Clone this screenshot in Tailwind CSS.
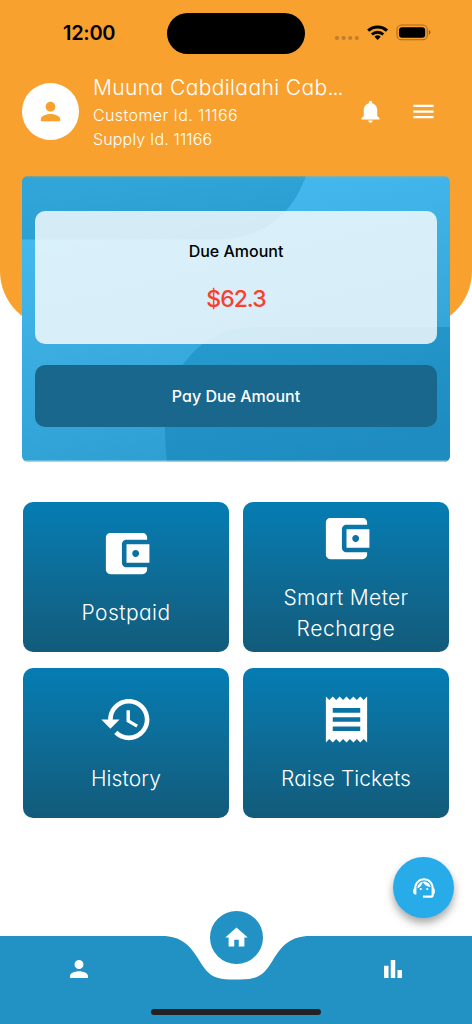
<!DOCTYPE html>
<html lang="en">
<head>
<meta charset="utf-8">
<title>Customer Home</title>
<script src="https://cdn.jsdelivr.net/npm/@tailwindcss/browser@4"></script>
</head>
<body class="bg-white font-['Inter','Open_Sans',sans-serif] [font-feature-settings:'cv11']">
<div class="relative w-[472px] h-[1024px] overflow-hidden bg-white flex flex-col">
  <div class="absolute inset-x-0 top-0 h-[328px] bg-[#f8a12f] rounded-b-[57px]"></div>

  <!-- status bar -->
  <div class="relative h-[66px] shrink-0 flex items-center pl-[63px] pr-[41px]">
    <div class="w-[104px] text-[20px] leading-none font-semibold text-black tracking-[-0.3px]">12:00</div>
    <div class="w-[138px] h-[41px] rounded-full bg-black"></div>
    <svg class="ml-[30px]" width="96" height="20" viewBox="335 22.5 96 20">
      <g fill="#c17f2c"><circle cx="337" cy="37.5" r="2.1"/><circle cx="343.6" cy="37.5" r="2.1"/><circle cx="350.2" cy="37.5" r="2.1"/><circle cx="356.8" cy="37.5" r="2.1"/></g>
      <g fill="none" stroke="#000" stroke-width="3"><path d="M368.2 30.2a13.6 13.6 0 0 1 18.8 0"/><path d="M371.9 34a8.2 8.2 0 0 1 11.4 0"/></g>
      <path d="M377.6 39.4l-3.1-3.2a4.6 4.6 0 0 1 6.2 0z"/>
      <rect x="397" y="24.5" width="30.3" height="14.8" rx="4.6" fill="none" stroke="#a56c24" stroke-width="1.1"/>
      <rect x="399" y="26.7" width="26.2" height="10.5" rx="3" />
      <path d="M428.8 29.6c2.2.6 2.2 4.1 0 4.700z" fill="#8d5d20"/>
    </svg>
  </div>

  <!-- header -->
  <div class="relative h-[110px] shrink-0 flex items-start pl-[22px] text-white">
    <div class="mt-[17px] size-[57px] rounded-full bg-white flex items-center justify-center">
      <svg width="29" height="29" viewBox="0 0 24 24" fill="#f8a12f"><path d="M12 12c2.210 0 4-1.790 4-4s-1.790-4-4-4-4 1.790-4 4 1.790 4 4 4zm0 2c-2.670 0-8 1.340-8 4v2h16v-2c0-2.660-5.330-4-8-4z"/></svg>
    </div>
    <div class="ml-[14px] mt-[7px] w-[264.300px] whitespace-nowrap font-[350]">
      <div class="text-[21px] leading-[30px] tracking-[0.4px]">Muuna Cabdilaahi Cab<span class="tracking-[-1px]">...</span></div>
      <div class="text-[16px] leading-[24px] tracking-[0.4px]">Customer Id. 11166</div>
      <div class="text-[16px] leading-[24px] tracking-[0.15px]">Supply Id. 11166</div>
    </div>
    <svg class="mt-[32px]" width="27" height="27" viewBox="0 0 24 24" fill="#fff"><path d="M12 22c1.100 0 2-.9 2-2h-4c0 1.100.89 2 2 2zm6-6v-5c0-3.070-1.640-5.640-4.500-6.320V4c0-.83-.67-1.500-1.500-1.500s-1.500.67-1.500 1.500v.68C7.630 5.360 6 7.920 6 11v5l-2 2v1h16v-1l-2-2z"/></svg>
    <svg class="mt-[32px] ml-[25.400px]" width="27" height="27" viewBox="0 0 24 24" fill="#fff"><path d="M3 18h18v-2H3v2zm0-5h18v-2H3v2zm0-7v2h18V6H3z"/></svg>
  </div>

  <!-- due amount card -->
  <div class="relative ml-[22px] w-[428px] h-[286px] shrink-0 rounded-[6px] overflow-hidden">
    <svg class="absolute inset-0" width="428" height="286" viewBox="22 176 428 286">
      <defs>
        <linearGradient id="base" gradientUnits="userSpaceOnUse" x1="200" y1="190" x2="260" y2="440"><stop offset="0" stop-color="#45b9ee"/><stop offset="1" stop-color="#2f9fd2"/></linearGradient>
        <linearGradient id="low" gradientUnits="userSpaceOnUse" x1="280" y1="327" x2="310" y2="462"><stop offset="0" stop-color="#2599cd"/><stop offset="1" stop-color="#1e8cc0"/></linearGradient>
        <linearGradient id="top" gradientUnits="userSpaceOnUse" x1="150" y1="176" x2="160" y2="240"><stop offset="0" stop-color="#31a4d8"/><stop offset="1" stop-color="#2a9dd1"/></linearGradient>
      </defs>
      <path fill="url(#base)" d="M22 176h428v286H22z"/>
      <path fill="url(#top)" d="M22 176H306C292 214 264 239.500 215 239.500H22z"/>
      <path fill="url(#low)" d="M167 462C162 414 166 383 184 363C202 340 222 327 262 327H450V462z"/>
      <path fill="#fff" fill-opacity=".55" d="M22 460.500h428v1.500H22z"/>
      <path fill="#f8a12f" fill-opacity=".4" d="M22 176h428v1.200H22z"/>
    </svg>
    <div class="relative px-[13px] pt-[35px] flex flex-col gap-[20.500px] text-center">
      <div class="h-[133px] rounded-[10px] bg-white/80 pt-[28px]">
        <div class="text-[16px] leading-[24px] font-medium text-black tracking-[0px]">Due Amount</div>
        <div class="mt-[19px] text-[23px] leading-[34px] font-medium text-[#f9402f] tracking-[-1px]">$62.3</div>
      </div>
      <div class="h-[62.400px] rounded-[10px] bg-[#19678d] flex items-center justify-center text-[16px] font-medium text-white tracking-[0px]">Pay Due Amount</div>
    </div>
  </div>

  <!-- services -->
  <div class="mt-[40px] ml-[23px] grid grid-cols-[206px_206px] grid-rows-[150px_150px] gap-x-[14px] gap-y-[16px] text-[21px] leading-[31px] font-[350] text-white text-center">
    <div class="rounded-[10px] bg-linear-to-b from-[#047db3] to-[#125b7a] flex flex-col items-center justify-center gap-[16px]">
      <svg width="55" height="55" viewBox="0 0 24 24" fill="#fff"><path d="M21 18v1c0 1.100-.9 2-2 2H5c-1.110 0-2-.9-2-2V5c0-1.100.89-2 2-2h14c1.100 0 2 .9 2 2v1h-9c-1.110 0-2 .9-2 2v8c0 1.100.89 2 2 2h9zm-9-2h10V8H12v8zm4-2.500c-.83 0-1.500-.67-1.500-1.500s.67-1.500 1.500-1.500 1.500.67 1.500 1.500-.67 1.500-1.500 1.500z"/></svg>
      <div class="tracking-[0.45px]">Postpaid</div>
    </div>
    <div class="rounded-[10px] bg-linear-to-b from-[#047db3] to-[#125b7a] flex flex-col items-center justify-center gap-[16px]">
      <svg class="shrink-0" width="55" height="55" viewBox="0 0 24 24" fill="#fff"><path d="M21 18v1c0 1.100-.9 2-2 2H5c-1.110 0-2-.9-2-2V5c0-1.100.89-2 2-2h14c1.100 0 2 .9 2 2v1h-9c-1.110 0-2 .9-2 2v8c0 1.100.89 2 2 2h9zm-9-2h10V8H12v8zm4-2.500c-.83 0-1.500-.67-1.500-1.500s.67-1.500 1.500-1.500 1.500.67 1.500 1.500-.67 1.500-1.500 1.500z"/></svg>
      <div class="tracking-[0.35px]">Smart Meter<br><span class="tracking-[0.6px]">Recharge</span></div>
    </div>
    <div class="rounded-[10px] bg-linear-to-b from-[#047db3] to-[#125b7a] flex flex-col items-center justify-center gap-[16px]">
      <svg width="55" height="55" viewBox="0 0 24 24" fill="#fff"><path d="M13 3c-4.970 0-9 4.030-9 9H1l3.890 3.890.07.14L9 12H6c0-3.870 3.130-7 7-7s7 3.130 7 7-3.130 7-7 7c-1.930 0-3.680-.79-4.940-2.060l-1.420 1.420C8.270 19.990 10.510 21 13 21c4.970 0 9-4.030 9-9s-4.030-9-9-9zm-1 5v5l4.280 2.540.72-1.210-3.500-2.080V8H12z"/></svg>
      <div class="tracking-[0.1px]">History</div>
    </div>
    <div class="rounded-[10px] bg-linear-to-b from-[#047db3] to-[#125b7a] flex flex-col items-center justify-center gap-[16px]">
      <svg width="55" height="55" viewBox="0 0 24 24" fill="#fff"><path d="M18 17H6v-2h12v2zm0-4H6v-2h12v2zm0-4H6V7h12v2zM3 22l1.500-1.500L6 22l1.500-1.500L9 22l1.500-1.500L12 22l1.500-1.500L15 22l1.500-1.500L18 22l1.500-1.500L21 22V2l-1.500 1.500L18 2l-1.500 1.500L15 2l-1.500 1.500L12 2l-1.500 1.500L9 2 7.500 3.500 6 2 4.500 3.500 3 2v20z"/></svg>
      <div class="tracking-[0.05px]">Raise Tickets</div>
    </div>
  </div>

  <!-- support button -->
  <div class="absolute left-[393px] top-[857px] size-[61px] rounded-full bg-[#28abe9] shadow-[0_5px_9px_rgba(0,0,0,0.35)] flex items-center justify-center">
    <svg width="26" height="26" viewBox="0 0 24 24" fill="#fff"><path d="M21 12.220C21 6.730 16.740 3 12 3c-4.690 0-9 3.650-9 9.280-.6.340-1 .98-1 1.720v2c0 1.100.9 2 2 2h1v-6.100c0-3.870 3.130-7 7-7s7 3.130 7 7V19h-8v2h8c1.100 0 2-.9 2-2v-1.220c.59-.31 1-.92 1-1.640v-2.300c0-.7-.41-1.310-1-1.620z"/><circle cx="9" cy="13" r="1"/><circle cx="15" cy="13" r="1"/><path d="M18 11.030C17.520 8.180 15.040 6 12.050 6c-3.030 0-6.290 2.510-6.030 6.450 2.470-1.010 4.330-3.210 4.860-5.890 1.310 2.630 4 4.440 7.120 4.470z"/></svg>
  </div>

  <!-- bottom navigation -->
  <div class="absolute inset-x-0 bottom-0 h-[114px]">
    <svg class="absolute inset-0" width="472" height="114" viewBox="0 910 472 114"><path fill="#2292c5" d="M0 936H162C181 936 190 945 199 960S214 979.500 232 979.500H240C258 979.500 264 975 273 960S291 936 310 936H472V1024H0z"/></svg>
    <div class="relative flex justify-between items-start pl-[65px] pr-[65px]">
      <svg class="mt-[45px]" width="28" height="28" viewBox="-.5 -.5 25 25" fill="#fff"><path d="M12 12c2.210 0 4-1.790 4-4s-1.790-4-4-4-4 1.790-4 4 1.790 4 4 4zm0 2c-2.670 0-8 1.340-8 4v2h16v-2c0-2.660-5.330-4-8-4z"/></svg>
      <div class="mt-[0.500px] size-[53px] rounded-full bg-[#2292c5] flex items-center justify-center">
        <svg width="27" height="27" viewBox="0 0 24 24" fill="#fff"><path d="M10 20v-6h4v6h5v-8h3L12 3 2 12h3v8z"/></svg>
      </div>
      <svg class="mt-[45px]" width="28" height="28" viewBox="-.5 -.5 25 25" fill="#fff"><path d="M4 9h4v11H4zm12 4h4v7h-4zm-6-9h4v16h-4z"/></svg>
    </div>
    <div class="absolute left-[151px] bottom-[9px] w-[170px] h-[6px] rounded-full bg-[#222]"></div>
  </div>
</div>
</body>
</html>
